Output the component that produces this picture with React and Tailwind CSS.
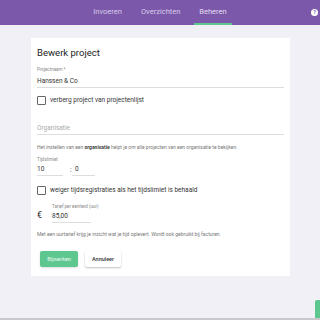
export default function App() {
  const tabs = ['Invoeren', 'Overzichten', 'Beheren'];

  return (
    <div className="relative h-[320px] overflow-hidden bg-[#f1f0f6] font-['Roboto',sans-serif] text-[#333]">
      {/* top nav */}
      <div className="relative flex h-[25px] items-end justify-center gap-[9px] bg-[#7b58a9]">
        {tabs.map((t) => (
          <div
            key={t}
            className={`flex h-[25px] items-center px-[5px] text-[7.5px] ${
              t === 'Beheren' ? 'border-b-2 border-[#5ec790] text-[#e4dcef]' : 'border-b-2 border-transparent text-[#d9cdea]'
            }`}
          >
            {t}
          </div>
        ))}
        <div className="absolute right-[2px] top-[9px] flex h-[7px] w-[7px] items-center justify-center rounded-full bg-white text-[5.5px] font-bold leading-none text-[#7b58a9]">
          ?
        </div>
      </div>

      {/* card */}
      <div className="ml-[31px] mt-[13px] w-[259px] bg-white px-[6px] pb-[9px] pt-[8px]">
        <h1 className="text-[9.5px] leading-[14px] text-[#222]">Bewerk project</h1>

        <div className="mt-[7px] text-[4.5px] leading-[6px] text-[#888]">Projectnaam *</div>
        <div className="mt-[3px] border-b border-[#ddd] pb-[1px] text-[6.5px] leading-[10px] text-[#333]">Hanssen &amp; Co</div>

        <label className="mt-[7px] flex items-center gap-[4px]">
          <span className="h-[9px] w-[9px] rounded-[1px] border border-[#666]" />
          <span className="text-[6.5px] leading-[10px] text-[#333]">verberg project van projectenlijst</span>
        </label>

        <div className="mt-[18px] border-b border-[#ddd] pb-[1px] text-[6.5px] leading-[10px] text-[#aaa]">Organisatie</div>

        <p className="mt-[9px] text-[5px] leading-[6px] text-[#777]">
          Het instellen van een <b className="font-bold text-[#444]">organisatie</b> helpt je om alle projecten van een organisatie te bekijken.
        </p>

        <div className="mt-[7px] text-[4.5px] leading-[6px] text-[#888]">Tijdslimiet</div>
        <div className="mt-[1px] flex items-end text-[6.5px] leading-[10px] text-[#333]">
          <span className="w-[26px] border-b border-[#ddd] pb-[1px]">10</span>
          <span className="w-[9px] pb-[1px] pl-[7px]">:</span>
          <span className="w-[23px] border-b border-[#ddd] pb-[1px] pl-[3px]">0</span>
        </div>

        <label className="mt-[9px] flex items-center gap-[4px]">
          <span className="h-[9px] w-[9px] rounded-[1px] border border-[#666]" />
          <span className="text-[6.5px] leading-[10px] text-[#333]">weiger tijdsregistraties als het tijdslimiet is behaald</span>
        </label>

        <div className="mt-[9px] flex items-end gap-[7px]">
          <span className="w-[8px] pb-[2px] text-[9px] leading-[12px] text-[#222]">€</span>
          <div>
            <div className="text-[4.5px] leading-[6px] text-[#888]">Tarief per eenheid (uur)</div>
            <div className="mt-[1px] w-[39px] border-b border-[#ddd] pb-[1px] text-[6.5px] leading-[10px] text-[#333]">85,00</div>
          </div>
        </div>

        <p className="mt-[8px] text-[5px] leading-[6px] text-[#777]">
          Met een uurtarief krijg je inzicht wat je tijd oplevert. Wordt ook gebruikt bij facturen.
        </p>

        <div className="mt-[14px] flex gap-[7px] pl-[3px]">
          <button className="h-[16px] w-[38px] rounded-[2px] bg-[#5ec790] text-[5.5px] text-[#eafaf1] shadow-sm">Bijwerken</button>
          <button className="h-[16px] w-[36px] rounded-[2px] bg-white text-[5.5px] font-medium text-[#333] shadow-[0_1px_2px_rgba(0,0,0,0.25)]">Annuleer</button>
        </div>
      </div>

      {/* feedback tab */}
      <div className="absolute bottom-[2px] right-0 h-[18px] w-[5px] rounded-tl-[2px] bg-[#5ec790]" />
      <div className="absolute bottom-0 left-0 h-[2px] w-full bg-[#c9c8cf]" />
    </div>
  );
}
